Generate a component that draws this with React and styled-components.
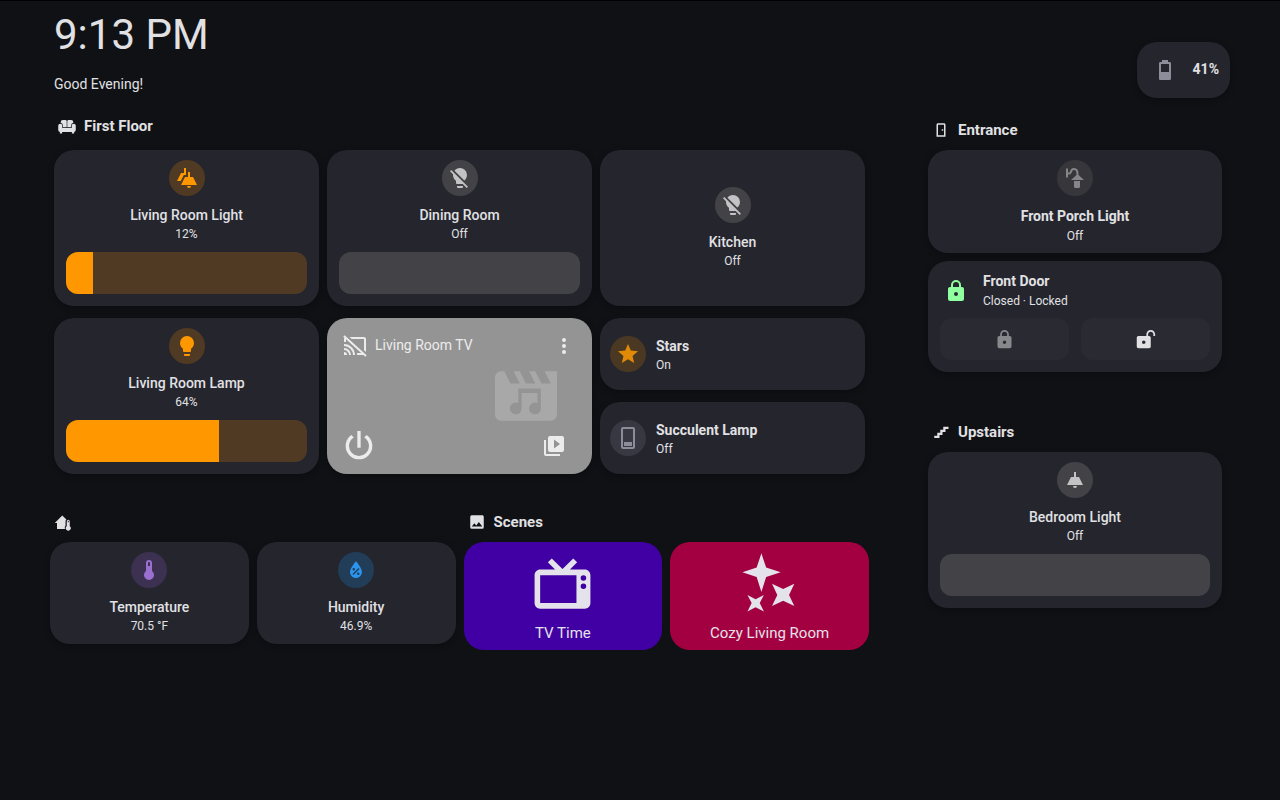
import React from "react";
import styled, { createGlobalStyle } from "styled-components";

const GlobalStyle = createGlobalStyle`
  *, *::before, *::after { box-sizing: border-box; }
  body {
    margin: 0;
    background: #101115;
    color: #e1e1e4;
    font-family: Roboto, "Liberation Sans", sans-serif;
    font-size: 14px;
    line-height: 20px;
  }
  h1, h2, h3, p { margin: 0; font: inherit; }
  button {
    border: 0;
    padding: 0;
    background: none;
    color: inherit;
    font: inherit;
    cursor: pointer;
  }
  svg { display: block; flex: none; fill: currentColor; }
`;

const paths = {
  bulb: "M12,2A7,7 0 0,0 5,9C5,11.38 6.19,13.47 8,14.74V17A1,1 0 0,0 9,18H15A1,1 0 0,0 16,17V14.74C17.81,13.47 19,11.38 19,9A7,7 0 0,0 12,2M9,21A1,1 0 0,0 10,22H14A1,1 0 0,0 15,21V20H9V21Z",
  bulbOff: "M12,2C9.76,2 7.78,3.05 6.5,4.68L16.31,14.5C17.94,13.21 19,11.24 19,9A7,7 0 0,0 12,2M3.28,4L2,5.27L5.04,8.3C5,8.53 5,8.76 5,9C5,11.38 6.19,13.47 8,14.74V17A1,1 0 0,0 9,18H14.73L18.73,22L20,20.72L3.28,4M9,20V21A1,1 0 0,0 10,22H14A1,1 0 0,0 15,21V20H9Z",
  pendant: "M8,9H11V4H13V9H16L20,17H4L8,9M14,18A2,2 0 0,1 12,20A2,2 0 0,1 10,18H14Z",
  pendants: "M10,11H13V6H15V11H18L22,19H6L10,11M16,20A2,2 0 0,1 14,22A2,2 0 0,1 12,20H16M9,2H11V9H8.8L5.8,15H2L6,7H9V2Z",
  star: "M12,17.27L18.18,21L16.54,13.97L22,9.24L14.81,8.62L12,2L9.19,8.62L2,9.24L7.45,13.97L5.82,21L12,17.27Z",
  deskLamp: "M7,1H17A2,2 0 0,1 19,3V21A2,2 0 0,1 17,23H7A2,2 0 0,1 5,21V3A2,2 0 0,1 7,1M7,3V21H17V3H7M8,16H16V20H8V16Z",
  castOff: "M1.6,1.27L0.25,2.75L1.41,3.8C1.16,4.13 1,4.55 1,5V8H3V5.23L18.2,19H14V21H20.41L22.31,22.72L23.65,21.24M6.5,3L8.7,5H21V16.14L23,17.95V5C23,3.89 22.1,3 21,3M1,10V12A9,9 0 0,1 10,21H12C12,14.92 7.08,10 1,10M1,14V16A5,5 0 0,1 6,21H8A7,7 0 0,0 1,14M1,18V21H4A3,3 0 0,0 1,18Z",
  dots: "M12,16A2,2 0 0,1 14,18A2,2 0 0,1 12,20A2,2 0 0,1 10,18A2,2 0 0,1 12,16M12,10A2,2 0 0,1 14,12A2,2 0 0,1 12,14A2,2 0 0,1 10,12A2,2 0 0,1 12,10M12,4A2,2 0 0,1 14,6A2,2 0 0,1 12,8A2,2 0 0,1 10,6A2,2 0 0,1 12,4Z",
  power: "M16.56,5.44L15.11,6.89C16.84,7.94 18,9.83 18,12A6,6 0 0,1 12,18A6,6 0 0,1 6,12C6,9.83 7.16,7.94 8.88,6.88L7.44,5.44C5.36,6.88 4,9.28 4,12A8,8 0 0,0 12,20A8,8 0 0,0 20,12C20,9.28 18.64,6.88 16.56,5.44M13,3H11V13H13",
  library: "M4,6H2V20A2,2 0 0,0 4,22H18V20H4V6M20,2H8A2,2 0 0,0 6,4V16A2,2 0 0,0 8,18H20A2,2 0 0,0 22,16V4A2,2 0 0,0 20,2M12,14.5V5.5L18,10L12,14.5Z",
  lock: "M12,17A2,2 0 0,0 14,15C14,13.89 13.1,13 12,13A2,2 0 0,0 10,15A2,2 0 0,0 12,17M18,8A2,2 0 0,1 20,10V20A2,2 0 0,1 18,22H6A2,2 0 0,1 4,20V10C4,8.89 4.9,8 6,8H7V6A5,5 0 0,1 12,1A5,5 0 0,1 17,6V8H18M12,3A3,3 0 0,0 9,6V8H15V6A3,3 0 0,0 12,3Z",
  unlock: "M18 1C15.24 1 13 3.24 13 6V8H4C2.9 8 2 8.89 2 10V20C2 21.11 2.9 22 4 22H16C17.11 22 18 21.11 18 20V10C18 8.9 17.11 8 16 8H15V6C15 4.34 16.34 3 18 3C19.66 3 21 4.34 21 6V8H23V6C23 3.24 20.76 1 18 1M10 13C11.1 13 12 13.89 12 15C12 16.11 11.11 17 10 17C8.9 17 8 16.11 8 15C8 13.9 8.9 13 10 13Z",
  sofa: "M6.5,4H9.8A1.8,1.8 0 0,1 11.6,5.8V13.6H6.6V11.5A4,4 0 0,0 3.6,7.8V7A3,3 0 0,1 6.5,4M14.2,4H17.5A3,3 0 0,1 20.4,7V7.8A4,4 0 0,0 17.4,11.5V13.6H12.4V5.8A1.8,1.8 0 0,1 14.2,4M3,9A2.7,2.7 0 0,1 5.7,11.7V14.8H18.3V11.7A2.7,2.7 0 0,1 23.7,11.7V17A3,3 0 0,1 21.5,19.9V22H18.5V20H5.5V22H2.5V19.9A3,3 0 0,1 0.3,17V11.7A2.7,2.7 0 0,1 3,9Z",
  thermometer: "M15 13V5A3 3 0 0 0 9 5V13A5 5 0 1 0 15 13M12 4A1 1 0 0 1 13 5V8H11V5A1 1 0 0 1 12 4Z",
  humidity: "M12,3.25C12,3.25 6,10 6,14C6,17.32 8.69,20 12,20A6,6 0 0,0 18,14C18,10 12,3.25 12,3.25M14.47,9.97L15.53,11.03L9.53,17.03L8.47,15.97M9.75,10A1.25,1.25 0 0,1 11,11.25A1.25,1.25 0 0,1 9.75,12.5A1.25,1.25 0 0,1 8.5,11.25A1.25,1.25 0 0,1 9.75,10M14.25,14.5A1.25,1.25 0 0,1 15.5,15.75A1.25,1.25 0 0,1 14.25,17A1.25,1.25 0 0,1 13,15.75A1.25,1.25 0 0,1 14.25,14.5Z",
  homeTemp: "M11,2L16.5,7.2A3.4,3.4 0 0,0 15.4,9.6V15.4A4.6,4.6 0 0,0 14.6,20H4V12H1L11,2M19,7.5A2,2 0 0,1 21,9.5V16.2A3.3,3.3 0 1,1 17,16.2V9.5A2,2 0 0,1 19,7.5M18.4,9V11H19.6V9Z",
  image: "M8.5,13.5L11,16.5L14.5,12L19,18H5M21,19V5C21,3.89 20.1,3 19,3H5A2,2 0 0,0 3,5V19A2,2 0 0,0 5,21H19A2,2 0 0,0 21,19Z",
  tv: "M8.16,3L6.75,4.41L9.34,7H4C2.89,7 2,7.89 2,9V19C2,20.11 2.89,21 4,21H20C21.11,21 22,20.11 22,19V9C22,7.89 21.11,7 20,7H14.66L17.25,4.41L15.84,3L12,6.84L8.16,3M4,9H17V19H4V9M19.5,9A1,1 0 0,1 20.5,10A1,1 0 0,1 19.5,11A1,1 0 0,1 18.5,10A1,1 0 0,1 19.5,9M19.5,12A1,1 0 0,1 20.5,13A1,1 0 0,1 19.5,14A1,1 0 0,1 18.5,13A1,1 0 0,1 19.5,12Z",
  sparkles: "M9.1,1.2L10.8,6.3L16,8L10.8,9.7L9.1,15L7.4,9.7L2.3,8L7.4,6.3ZM12.9,12.1L16.9,14L20.9,12.1L19,16.1L20.9,20.1L16.9,18.2L12.9,20.1L14.8,16.1ZM4.1,16.1L7,17.6L10,16.1L8.5,19L10,22L7,20.5L4.1,22L5.6,19Z",
  battery: "M16,14H8V6H16M16.67,4H15V2H9V4H7.33A1.33,1.33 0 0,0 6,5.33V20.67C6,21.4 6.6,22 7.33,22H16.67A1.33,1.33 0 0,0 18,20.67V5.33C18,4.6 17.4,4 16.67,4Z",
  door: "M8,3C6.89,3 6,3.89 6,5V21H18V5C18,3.89 17.11,3 16,3H8M8,5H16V19H8V5M13,11V13H15V11H13Z",
  stairs: "M15,5V9H11V13H7V17H3V20H10V16H14V12H18V8H22V5H15Z",
  media: "M18,4L20,8H17L15,4H13L15,8H12L10,4H8L10,8H7L5,4H4A2,2 0 0,0 2,6V18A2,2 0 0,0 4,20H20A2,2 0 0,0 22,18V4H18M9.5,9.6H16.8V16A1.9,1.9 0 1,1 15.7,14.3V11H10.6V16A1.9,1.9 0 1,1 9.5,14.3Z",
};

function Icon({ name, size = 24 }) {
  return (
    <svg width={size} height={size} viewBox="0 0 24 24" aria-hidden="true">
      <path fillRule="evenodd" d={paths[name]} />
    </svg>
  );
}

function PorchLampIcon() {
  return (
    <svg width="24" height="24" viewBox="0 0 24 24" aria-hidden="true">
      <path d="M3,2.5H5V11.5H3ZM13.5,9L8,14H21L15.5,9ZM11,15H17V20.5A1.5,1.5 0 0,1 15.5,22H12.5A1.5,1.5 0 0,1 11,20.5Z" />
      <path d="M4,7.5H6.5C8.2,7.5 7.5,3 10.8,3C13.6,3 14.6,4.2 14.6,10" fill="none" stroke="currentColor" strokeWidth="2" />
    </svg>
  );
}

const Page = styled.div`
  border-top: 1px solid #000;
  padding: 0 50px 48px;
  display: grid;
  grid-template-columns: minmax(0, 819fr) minmax(0, 310fr);
  column-gap: 51px;
  align-items: start;
`;

const MainColumn = styled.main`
  display: flex;
  flex-direction: column;
  padding-top: 10px;
`;

const SideColumn = styled.aside`
  display: flex;
  flex-direction: column;
  padding-top: 41px;
`;

const Clock = styled.h1`
  padding-left: 4px;
  font-size: 42px;
  line-height: 48px;
`;

const Greeting = styled.p`
  padding: 15px 4px 0;
`;

const Section = styled.section`
  display: flex;
  flex-direction: column;
  gap: ${(p) => p.$gap || 10}px;
  padding: 0 ${(p) => p.$inset || 0}px;
  margin-top: ${(p) => p.$top}px;
`;

const Heading = styled.h2`
  display: flex;
  align-items: ${(p) => (p.$low ? "flex-end" : "center")};
  gap: 8px;
  height: 20px;
  padding-left: 4px;
  font-size: 15px;
  font-weight: 700;
`;

const Card = styled.article`
  background: #24252d;
  border-radius: 20px;
  box-shadow: 0 2px 6px rgba(0, 0, 0, 0.3);
`;

const FloorGrid = styled.div`
  display: grid;
  grid-template-columns: repeat(3, minmax(0, 1fr));
  gap: 12px 8px;
`;

const BottomGrid = styled.div`
  display: grid;
  grid-template-columns: repeat(2, minmax(0, 1fr));
  gap: 8px;
  margin-top: 38px;
`;

const PairGrid = styled.div`
  display: grid;
  grid-template-columns: repeat(2, minmax(0, 1fr));
  gap: 8px;
  align-items: start;
`;

const Stack = styled.div`
  display: flex;
  flex-direction: column;
  gap: ${(p) => p.$gap}px;
`;

const TileCard = styled(Card)`
  display: flex;
  flex-direction: column;
  align-items: center;
  justify-content: center;
  padding: 10px 12px ${(p) => p.$bottom || 9}px;
`;

const RowCard = styled(Card)`
  display: flex;
  align-items: center;
  gap: 10px;
  height: 72px;
  padding: 0 10px;
`;

const tones = {
  amber: ["#513a23", "#ff9800"],
  star: ["#4a3823", "#e08a08"],
  gray: ["#434347", "#c3c3c5"],
  dim: ["#37373b", "#868688"],
  slate: ["#373841", "#8d8d9a"],
  purple: ["#3c3150", "#9a6fd0"],
  blue: ["#223d57", "#2c94ee"],
};

const IconButton = styled.button`
  width: 36px;
  height: 36px;
  flex: none;
  display: grid;
  place-items: center;
  border-radius: 50%;
  background: ${(p) => tones[p.$tone][0]};
  color: ${(p) => tones[p.$tone][1]};
`;

const TileInfo = styled.div`
  margin-top: ${(p) => (p.$roomy ? 10 : 9)}px;
  text-align: center;
`;

const RowInfo = styled.div`
  padding-top: 2px;
`;

const Name = styled.h3`
  font-size: 14px;
  line-height: 20px;
  font-weight: ${(p) => (p.$bold ? 700 : 500)};
`;

const State = styled.p`
  font-size: 12px;
  line-height: ${(p) => (p.$roomy ? 20 : 18)}px;
`;

const Slider = styled.input`
  appearance: none;
  width: 100%;
  height: 42px;
  margin: 9px 0 0;
  border-radius: 12px;
  cursor: pointer;
  background: ${(p) =>
    p.$on
      ? `linear-gradient(to right, #ff9800 ${p.$fill}%, #513a23 ${p.$fill}%)`
      : "#434347"};

  &::-webkit-slider-thumb {
    appearance: none;
    width: 1px;
    height: 42px;
    opacity: 0;
  }
`;

const MediaCard = styled(Card)`
  display: flex;
  flex-direction: column;
  background: #949494;
  color: #ececec;
`;

const MediaTop = styled.div`
  display: flex;
  align-items: center;
  gap: 8px;
  padding: 16px 16px 0;
`;

const MediaName = styled.h3`
  flex: 1;
  line-height: 20px;
  padding-bottom: 2px;
`;

const MediaArt = styled.div`
  display: flex;
  justify-content: flex-end;
  padding: 13px 35px 5px 0;
  color: #a9a8a9;
`;

const MediaBottom = styled.div`
  display: flex;
  align-items: center;
  justify-content: space-between;
  padding: 0 26px 8px 12px;
`;

const SceneButton = styled.button`
  display: flex;
  flex-direction: column;
  align-items: center;
  gap: 6px;
  height: 108px;
  padding-top: 8px;
  border-radius: 20px;
  background: ${(p) => p.$color};
  color: #e4e2ea;
  font-size: 15px;
  line-height: 20px;
`;

const BatteryCard = styled(Card)`
  align-self: flex-end;
  display: flex;
  align-items: center;
  gap: 16px;
  height: 56px;
  padding: 0 11px 0 16px;
  color: #8d8d9a;
`;

const BatteryLevel = styled.span`
  padding-bottom: 2px;
  color: #e1e1e4;
  font-weight: 700;
`;

const DoorCard = styled(Card)`
  padding: 10px 12px 12px;
`;

const DoorTop = styled.div`
  display: flex;
  align-items: center;
  gap: 15px;
  padding-left: 4px;
  color: #8fff9f;
`;

const DoorInfo = styled.div`
  color: #e1e1e4;
`;

const DoorActions = styled.div`
  display: grid;
  grid-template-columns: 1fr 1fr;
  gap: 12px;
  margin-top: 7px;
`;

const DoorButton = styled.button`
  display: grid;
  place-items: center;
  height: 42px;
  border-radius: 12px;
  background: #2a2a33;
  color: ${(p) => (p.disabled ? "#88888c" : "#e1e1e4")};
`;

function LightTile({ name, state, icon, tone, level }) {
  const hasSlider = level !== undefined;
  return (
    <TileCard $bottom={hasSlider ? 12 : 9}>
      <IconButton $tone={tone} aria-label={`Toggle ${name}`}>
        <Icon name={icon} />
      </IconButton>
      <TileInfo>
        <Name>{name}</Name>
        <State>{state}</State>
      </TileInfo>
      {hasSlider && (
        <Slider
          type="range"
          min="1"
          max="100"
          defaultValue={level}
          aria-label={`${name} brightness`}
          $on={level > 0}
          $fill={((level - 1) / 99) * 100}
        />
      )}
    </TileCard>
  );
}

function RowTile({ name, state, icon, tone }) {
  return (
    <RowCard>
      <IconButton $tone={tone} aria-label={`Toggle ${name}`}>
        <Icon name={icon} />
      </IconButton>
      <RowInfo>
        <Name $bold>{name}</Name>
        <State>{state}</State>
      </RowInfo>
    </RowCard>
  );
}

function MediaTile() {
  return (
    <MediaCard>
      <MediaTop>
        <Icon name="castOff" />
        <MediaName>Living Room TV</MediaName>
        <button aria-label="More options"><Icon name="dots" /></button>
      </MediaTop>
      <MediaArt>
        <svg width="62" height="50" viewBox="2 4 20 16" aria-hidden="true">
          <path fillRule="evenodd" d={paths.media} />
        </svg>
      </MediaArt>
      <MediaBottom>
        <button aria-label="Power"><Icon name="power" size={40} /></button>
        <button aria-label="Browse media"><Icon name="library" /></button>
      </MediaBottom>
    </MediaCard>
  );
}

export default function App() {
  return (
    <>
      <GlobalStyle />
      <Page>
        <MainColumn>
          <Clock>9:13 PM</Clock>
          <Greeting>Good Evening!</Greeting>

          <Section $top={22} $gap={14} $inset={4}>
            <Heading><Icon name="sofa" size={18} />First Floor</Heading>
            <FloorGrid>
              <LightTile name="Living Room Light" state="12%" icon="pendants" tone="amber" level={12} />
              <LightTile name="Dining Room" state="Off" icon="bulbOff" tone="gray" level={0} />
              <LightTile name="Kitchen" state="Off" icon="bulbOff" tone="gray" />
              <LightTile name="Living Room Lamp" state="64%" icon="bulb" tone="amber" level={64} />
              <MediaTile />
              <Stack $gap={12}>
                <RowTile name="Stars" state="On" icon="star" tone="star" />
                <RowTile name="Succulent Lamp" state="Off" icon="deskLamp" tone="slate" />
              </Stack>
            </FloorGrid>
          </Section>

          <BottomGrid>
            <Section>
              <Heading $low aria-label="Climate"><Icon name="homeTemp" size={18} /></Heading>
              <PairGrid>
                <LightTile name="Temperature" state="70.5 °F" icon="thermometer" tone="purple" />
                <LightTile name="Humidity" state="46.9%" icon="humidity" tone="blue" />
              </PairGrid>
            </Section>
            <Section>
              <Heading><Icon name="image" size={18} />Scenes</Heading>
              <PairGrid>
                <SceneButton $color="#4100a3"><Icon name="tv" size={67} />TV Time</SceneButton>
                <SceneButton $color="#a30041"><Icon name="sparkles" size={67} />Cozy Living Room</SceneButton>
              </PairGrid>
            </Section>
          </BottomGrid>
        </MainColumn>

        <SideColumn>
          <BatteryCard>
            <Icon name="battery" />
            <BatteryLevel>41%</BatteryLevel>
          </BatteryCard>

          <Section $top={22} $inset={8}>
            <Heading><Icon name="door" size={18} />Entrance</Heading>
            <Stack $gap={8}>
              <TileCard $bottom={7}>
                <IconButton $tone="dim" aria-label="Toggle Front Porch Light">
                  <PorchLampIcon />
                </IconButton>
                <TileInfo $roomy>
                  <Name $bold>Front Porch Light</Name>
                  <State $roomy>Off</State>
                </TileInfo>
              </TileCard>
              <DoorCard>
                <DoorTop>
                  <Icon name="lock" />
                  <DoorInfo>
                    <Name $bold>Front Door</Name>
                    <State $roomy>Closed · Locked</State>
                  </DoorInfo>
                </DoorTop>
                <DoorActions>
                  <DoorButton aria-label="Lock" disabled><Icon name="lock" size={21} /></DoorButton>
                  <DoorButton aria-label="Unlock"><Icon name="unlock" size={21} /></DoorButton>
                </DoorActions>
              </DoorCard>
            </Stack>
          </Section>

          <Section $top={50} $inset={8}>
            <Heading><Icon name="stairs" size={18} />Upstairs</Heading>
            <LightTile name="Bedroom Light" state="Off" icon="pendant" tone="gray" level={0} />
          </Section>
        </SideColumn>
      </Page>
    </>
  );
}
